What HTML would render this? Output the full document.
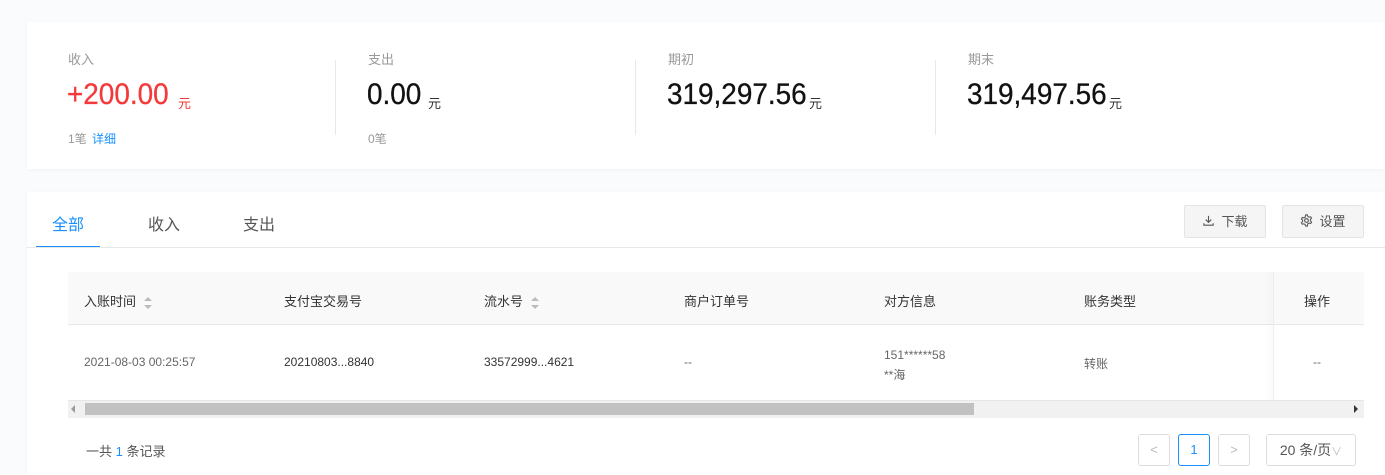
<!DOCTYPE html><html><head><meta charset="utf-8"><style>
*{margin:0;padding:0;box-sizing:border-box}
body{width:1385px;height:475px;background:#fafbfc;font-family:"Liberation Sans","Noto Sans CJK SC",sans-serif;position:relative;overflow:hidden;color:#333}
.a{position:absolute}
.card{background:#fff;position:absolute;box-shadow:0 1px 4px rgba(0,0,0,.03)}
.lab{font-size:13px;color:#999}
.num{font-size:30px;color:#111;font-family:"Liberation Sans",sans-serif;-webkit-text-stroke:0.3px currentColor;display:inline-block;transform:scaleX(0.93);transform-origin:left}
.yuan{font-size:13px}
.sep{width:1px;height:75px;background:#e8e8e8}
.th{font-size:13px;color:#333}
.td{font-size:12px;color:#333}
.btn{border:1px solid #e4e4e4;background:#f5f5f5;border-radius:2px;font-size:13px;color:#555;height:33px;line-height:31px;text-align:center}
.pg{border:1px solid #ddd;border-radius:3px;width:32px;height:32px;text-align:center;line-height:30px;font-size:13px;color:#bbb;background:#fff}
.sort{display:inline-block;vertical-align:middle;margin-left:8px;width:8px;height:12px;position:relative}
.sort:before{content:"";position:absolute;top:0;left:0;border:4px solid transparent;border-bottom:4px solid #bbb;border-top:0}
.sort:after{content:"";position:absolute;bottom:0;left:0;border:4px solid transparent;border-top:4px solid #bbb;border-bottom:0}
</style></head><body>
<div class="card" style="left:27px;top:22px;width:1358px;height:147px"></div>
<div class="card" style="left:27px;top:192px;width:1358px;height:283px"></div>

<div class="a lab" style="left:68px;top:49px">收入</div>
<div class="a num" style="left:67px;top:78px;color:#f5393a">+200.00</div><div class="a yuan" style="left:178px;top:93px;color:#f5393a">元</div>
<div class="a lab" style="left:68px;top:130px;font-size:12px">1笔 <span style="color:#1890ff;margin-left:2px">详细</span></div>
<div class="a sep" style="left:335px;top:60px"></div>

<div class="a lab" style="left:368px;top:49px">支出</div>
<div class="a num" style="left:367px;top:78px">0.00</div><div class="a yuan" style="left:428px;top:93px">元</div>
<div class="a lab" style="left:368px;top:130px;font-size:12px">0笔</div>
<div class="a sep" style="left:635px;top:60px"></div>

<div class="a lab" style="left:668px;top:49px">期初</div>
<div class="a num" style="left:667px;top:78px">319,297.56</div><div class="a yuan" style="left:809px;top:93px">元</div>
<div class="a sep" style="left:935px;top:60px"></div>

<div class="a lab" style="left:968px;top:49px">期末</div>
<div class="a num" style="left:967px;top:78px">319,497.56</div><div class="a yuan" style="left:1109px;top:93px">元</div>

<div class="a" style="left:52px;top:211px;font-size:16px;color:#1890ff">全部</div>
<div class="a" style="left:148px;top:211px;font-size:16px;color:#555">收入</div>
<div class="a" style="left:243px;top:211px;font-size:16px;color:#555">支出</div>
<div class="a" style="left:36px;top:246px;width:64px;height:2px;background:#1890ff"></div>
<div class="a" style="left:27px;top:247px;width:1358px;height:1px;background:#e8e8e8"></div>

<div class="a btn" style="left:1184px;top:205px;width:82px"><svg width="13" height="13" viewBox="0 0 14 14" style="vertical-align:-1px;margin-right:6px"><path d="M7 2v7M4 6l3 3 3-3M2 10v2h10v-2" fill="none" stroke="#555" stroke-width="1.2"/></svg>下载</div>
<div class="a btn" style="left:1282px;top:205px;width:82px"><svg width="13" height="13" viewBox="0 0 14 14" style="vertical-align:-1px;margin-right:6px"><circle cx="7" cy="7" r="2" fill="none" stroke="#555" stroke-width="1.2"/><path d="M6 1h2l.4 1.7 1.5.8 1.6-.6 1 1.7-1.3 1.2v1.6l1.3 1.2-1 1.7-1.6-.6-1.5.8L8 13H6l-.4-1.7-1.5-.8-1.6.6-1-1.7 1.3-1.2V6.6L1.5 5.4l1-1.7 1.6.6 1.5-.8z" fill="none" stroke="#555" stroke-width="1.1"/></svg>设置</div>

<div class="a" style="left:68px;top:272px;width:1296px;height:53px;background:#f9f9f9;border-bottom:1px solid #e8e8e8"></div>
<div class="a th" style="left:84px;top:291px">入账时间<span class="sort"></span></div>
<div class="a th" style="left:284px;top:291px">支付宝交易号</div>
<div class="a th" style="left:484px;top:291px">流水号<span class="sort"></span></div>
<div class="a th" style="left:684px;top:291px">商户订单号</div>
<div class="a th" style="left:884px;top:291px">对方信息</div>
<div class="a th" style="left:1084px;top:291px">账务类型</div>
<div class="a" style="left:1273px;top:272px;width:1px;height:128px;box-shadow:-3px 0 6px rgba(0,0,0,.12);background:#eee"></div>
<div class="a th" style="left:1304px;top:291px">操作</div>

<div class="a td" style="left:84px;top:355px;color:#666">2021-08-03 00:25:57</div>
<div class="a td" style="left:284px;top:355px">20210803...8840</div>
<div class="a td" style="left:484px;top:355px">33572999...4621</div>
<div class="a td" style="left:684px;top:355px;color:#666">--</div>
<div class="a td" style="left:884px;top:345px;color:#666;line-height:20px">151******58<br>**海</div>
<div class="a td" style="left:1084px;top:355px;color:#666">转账</div>
<div class="a td" style="left:1313px;top:355px;color:#666">--</div>

<div class="a" style="left:68px;top:400px;width:1296px;height:18px;background:#f1f1f1;border-top:1px solid #e6e6e6"></div>
<div class="a" style="left:85px;top:403px;width:889px;height:12px;background:#c1c1c1"></div>
<div class="a" style="left:71px;top:405px;width:0;height:0;border:4px solid transparent;border-right:4px solid #999;border-left:0"></div>
<div class="a" style="left:1354px;top:405px;width:0;height:0;border:4px solid transparent;border-left:4px solid #333;border-right:0"></div>

<div class="a" style="left:86px;top:441px;font-size:13px;color:#555">一共 <span style="color:#1890ff">1</span> 条记录</div>
<div class="a pg" style="left:1138px;top:434px">&lt;</div>
<div class="a pg" style="left:1178px;top:434px;border-color:#1890ff;color:#1890ff">1</div>
<div class="a pg" style="left:1218px;top:434px">&gt;</div>
<div class="a pg" style="left:1266px;top:434px;width:90px;color:#555;font-size:14px">20 条/页<span style="color:#bbb;font-size:11px">∨</span></div>
</body></html>
